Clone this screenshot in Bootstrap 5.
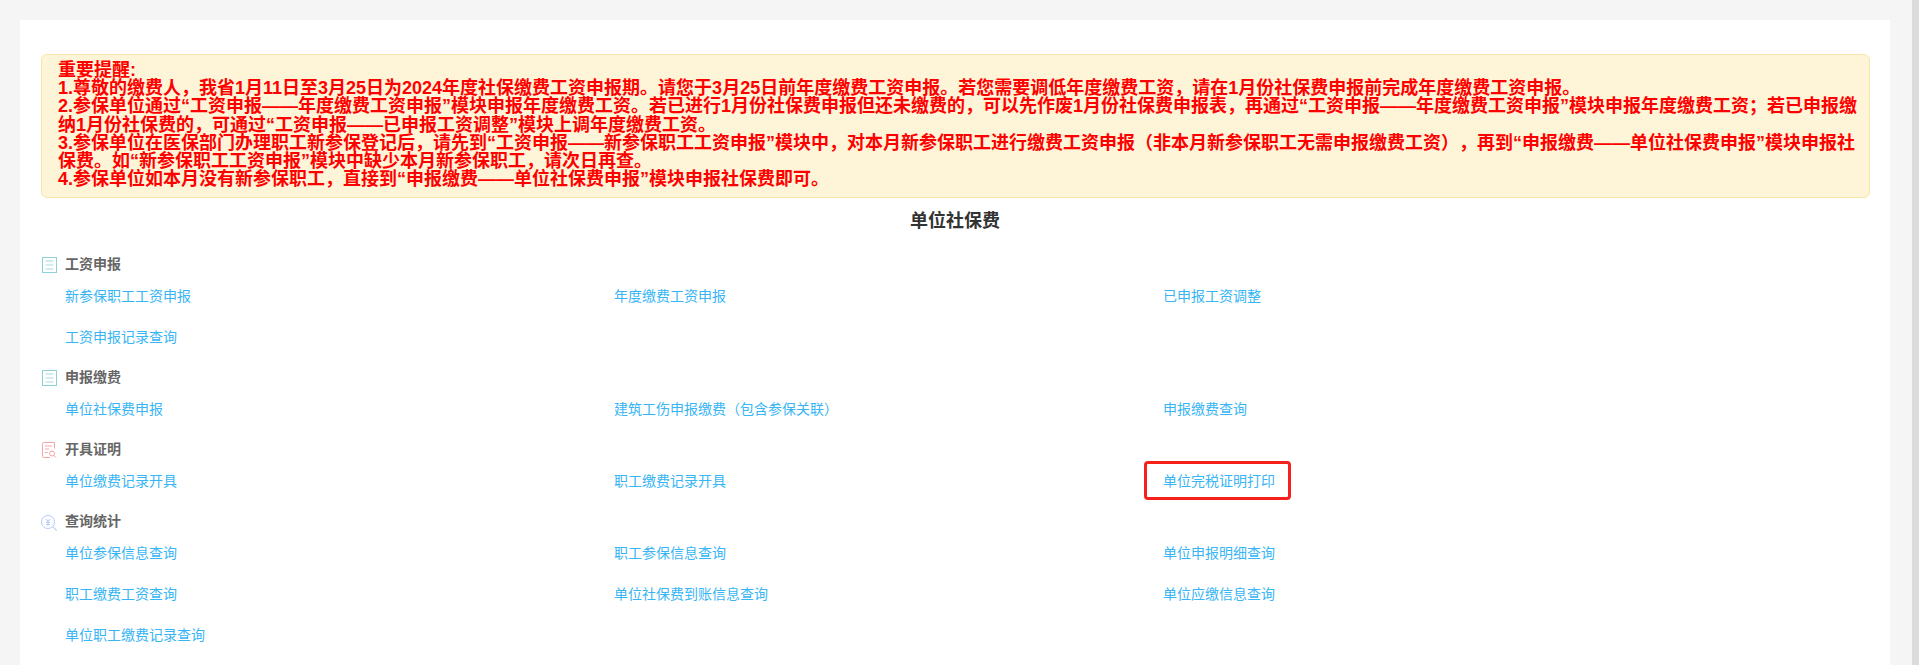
<!DOCTYPE html>
<html lang="zh">
<head>
<meta charset="utf-8">
<title>单位社保费</title>
<link href="https://cdn.jsdelivr.net/npm/bootstrap@5.3.0/dist/css/bootstrap.min.css" rel="stylesheet">
<style>
html,body{height:665px;overflow:hidden}
body{background:#f5f5f5;font-family:"Liberation Sans","Noto Sans CJK SC",sans-serif;font-size:14px;color:#333}
.page-wrap{display:flex;height:665px}
.page-main{flex:1 1 auto;min-width:0;padding:20px 22px 0 20px}
.scroll-track{flex:0 0 7px;background:#dcdcdc}
.sheet{background:#fff;height:645px;padding:34px 20px 0 20px}
.notice{background:#fef5d9;border:1px solid #f6e7a6;border-radius:6px;padding:6px 17px 9px 16px;margin:0 0 0 1px;color:#f00;font-size:18px;font-weight:700;line-height:18.2px;white-space:nowrap;text-spacing-trim:space-all}
.sheet-title{font-size:18px;font-weight:700;color:#333;text-align:center;line-height:24px;margin:11px 0 0;padding-bottom:0}
.group{margin-top:10px}
.group:first-of-type{margin-top:21px}
.group-head{display:flex;align-items:center;gap:8px;height:21px;margin:0;padding-left:0;font-size:14px;font-weight:700;color:#666;line-height:21px}
.group-head svg{flex:none;display:block;overflow:visible}
.links{--bs-gutter-x:0;--bs-gutter-y:0;width:1647px;margin:0 0 0 25px}
.links>div{height:41px;display:flex;align-items:center}
.links a{color:#38b5f5;text-decoration:none;font-size:14px;line-height:20px;position:relative}
.links a.marked::after{content:"";position:absolute;left:-19px;right:-16px;top:-10px;bottom:-9px;border:3px solid #f5211a;border-radius:4px}
</style>
</head>
<body>
<div class="page-wrap">
  <main class="page-main">
    <div class="sheet">
      <div class="alert notice" role="alert">重要提醒:<br>
1.尊敬的缴费人，我省1月11日至3月25日为2024年度社保缴费工资申报期。请您于3月25日前年度缴费工资申报。若您需要调低年度缴费工资，请在1月份社保费申报前完成年度缴费工资申报。<br>
2.参保单位通过“工资申报——年度缴费工资申报”模块申报年度缴费工资。若已进行1月份社保费申报但还未缴费的，可以先作废1月份社保费申报表，再通过“工资申报——年度缴费工资申报”模块申报年度缴费工资；若已申报缴<br>纳1月份社保费的，可通过“工资申报——已申报工资调整”模块上调年度缴费工资。<br>
3.参保单位在医保部门办理职工新参保登记后，请先到“工资申报——新参保职工工资申报”模块中，对本月新参保职工进行缴费工资申报（非本月新参保职工无需申报缴费工资），再到“申报缴费——单位社保费申报”模块申报社<br>保费。如“新参保职工工资申报”模块中缺少本月新参保职工，请次日再查。<br>
4.参保单位如本月没有新参保职工，直接到“申报缴费——单位社保费申报”模块申报社保费即可。</div>
      <h1 class="sheet-title">单位社保费</h1>

      <section class="group">
        <h2 class="group-head"><svg width="17" height="17" viewBox="0 0 17 17" fill="none"><rect x="2.500" y="1.500" width="14" height="15" stroke="#8fd0d8"/><path d="M5.500 5h8M5.500 9h8M5.500 13h8" stroke="#c3e6ea" stroke-width="1.500"/></svg>工资申报</h2>
        <div class="row row-cols-3 links">
          <div class="col"><a href="#">新参保职工工资申报</a></div>
          <div class="col"><a href="#">年度缴费工资申报</a></div>
          <div class="col"><a href="#">已申报工资调整</a></div>
          <div class="col"><a href="#">工资申报记录查询</a></div>
        </div>
      </section>

      <section class="group">
        <h2 class="group-head"><svg width="17" height="17" viewBox="0 0 17 17" fill="none"><rect x="2.500" y="1.500" width="14" height="15" stroke="#8fd0d8"/><path d="M5.500 5h8M5.500 9h8M5.500 13h8" stroke="#c3e6ea" stroke-width="1.500"/></svg>申报缴费</h2>
        <div class="row row-cols-3 links">
          <div class="col"><a href="#">单位社保费申报</a></div>
          <div class="col"><a href="#">建筑工伤申报缴费（包含参保关联）</a></div>
          <div class="col"><a href="#">申报缴费查询</a></div>
        </div>
      </section>

      <section class="group">
        <h2 class="group-head"><svg width="17" height="17" viewBox="0 0 17 17" fill="none" stroke="#f6a3a3"><path d="M14.500 7.500V1.500H3.500a1 1 0 0 0-1 1v13a1 1 0 0 0 1 1H10"/><path d="M5 5h7M5 8h4M5 11.500h2.500"/><circle cx="12" cy="12.500" r="2.500"/><path d="m14 14.500 2 2"/></svg>开具证明</h2>
        <div class="row row-cols-3 links">
          <div class="col"><a href="#">单位缴费记录开具</a></div>
          <div class="col"><a href="#">职工缴费记录开具</a></div>
          <div class="col"><a href="#" class="marked">单位完税证明打印</a></div>
        </div>
      </section>

      <section class="group">
        <h2 class="group-head"><svg width="17" height="17" viewBox="0 0 17 17" fill="none" stroke="#b6cbfa"><circle cx="8" cy="9" r="6.500"/><path d="m12.700 13.700 4 4M6 6l2 2.500 2-2.500M8 8.500v4M6 9.500h4M6 11.500h4" stroke-width="1.100"/></svg>查询统计</h2>
        <div class="row row-cols-3 links">
          <div class="col"><a href="#">单位参保信息查询</a></div>
          <div class="col"><a href="#">职工参保信息查询</a></div>
          <div class="col"><a href="#">单位申报明细查询</a></div>
          <div class="col"><a href="#">职工缴费工资查询</a></div>
          <div class="col"><a href="#">单位社保费到账信息查询</a></div>
          <div class="col"><a href="#">单位应缴信息查询</a></div>
          <div class="col"><a href="#">单位职工缴费记录查询</a></div>
        </div>
      </section>
    </div>
  </main>
  <div class="scroll-track"></div>
</div>
<script src="https://cdn.jsdelivr.net/npm/bootstrap@5.3.0/dist/js/bootstrap.bundle.min.js"></script>
</body>
</html>
